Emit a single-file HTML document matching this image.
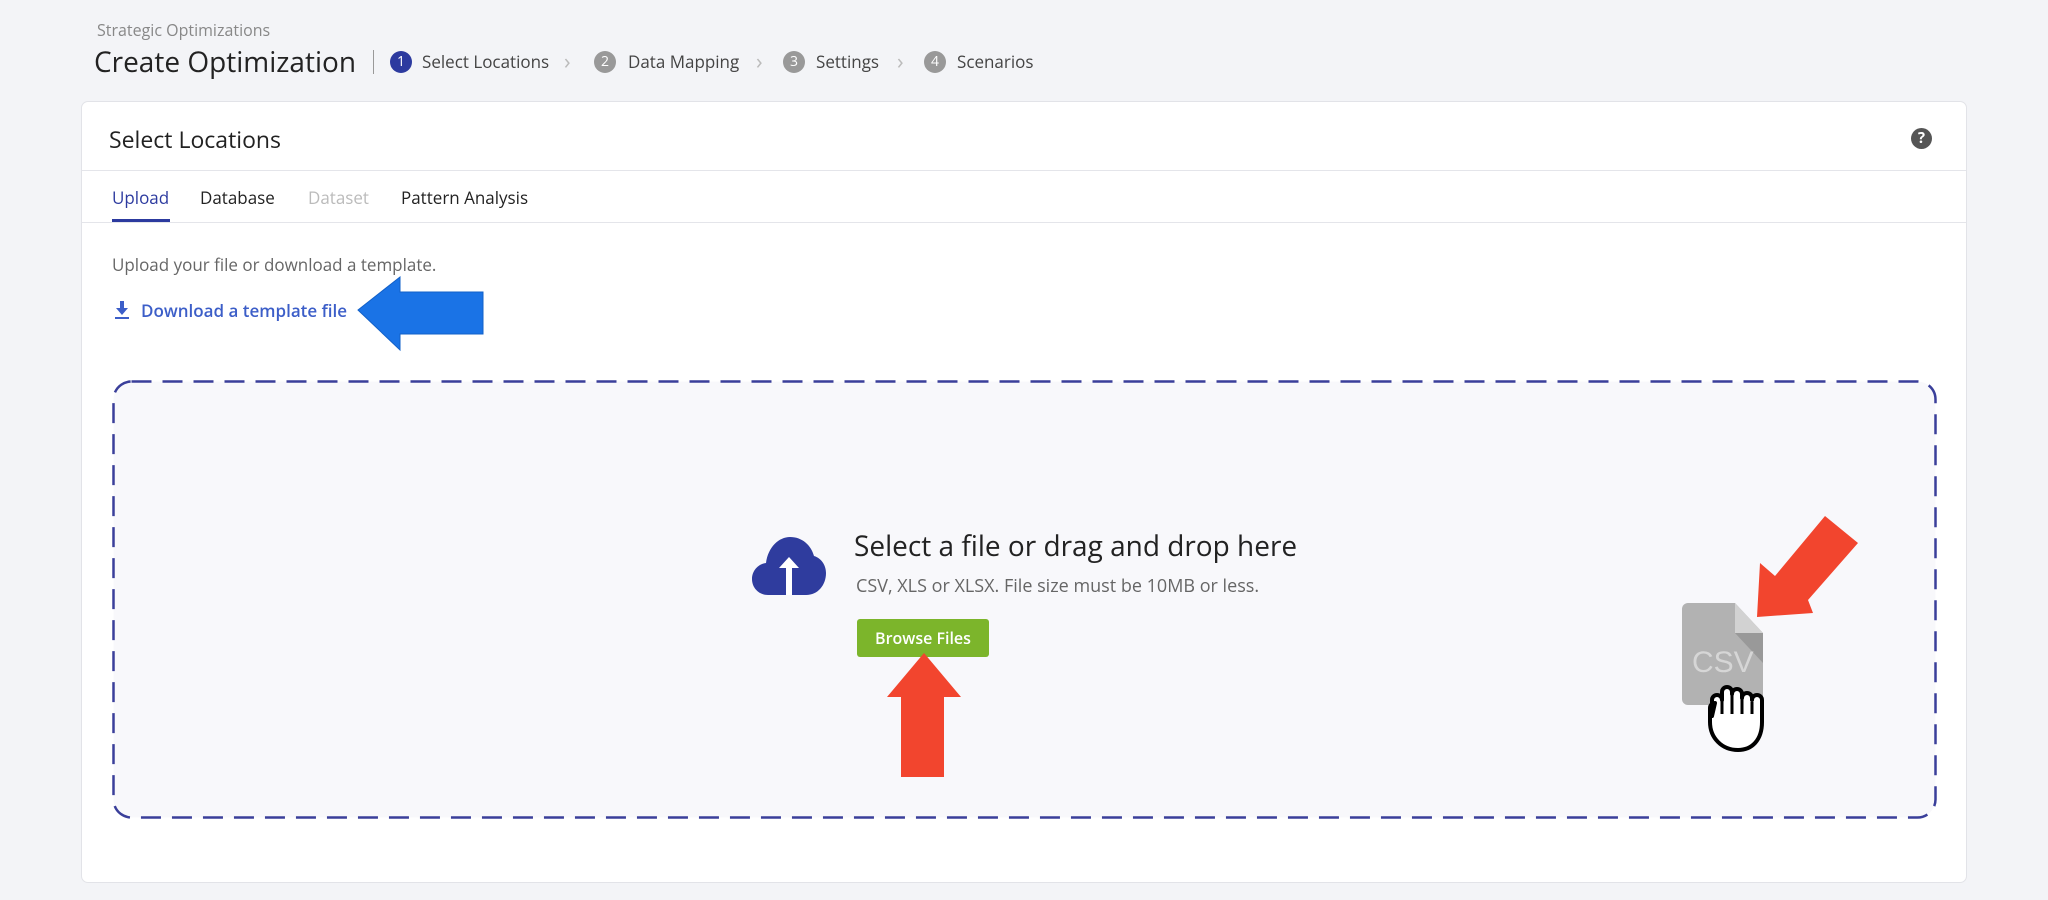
<!DOCTYPE html>
<html><head><meta charset="utf-8"><style>
*{margin:0;padding:0;box-sizing:border-box}
body{width:2048px;height:900px;background:#f3f4f7;font-family:"Open Sans","Liberation Sans",sans-serif;position:relative;overflow:hidden;color:#222}
.a{position:absolute;white-space:nowrap}
.circ{position:absolute;width:22px;height:22px;border-radius:50%;background:#999;color:#fff;font-size:14px;text-align:center;line-height:22px}
.step{font-size:17px;color:#444}
.chev{color:#bbb;font-size:22px;line-height:22px}
.card{position:absolute;left:81px;top:101px;width:1886px;height:782px;background:#fff;border:1px solid #e2e3e8;border-radius:7px}
.tab{font-size:17px;color:#222}
</style></head><body>
<div class="a" style="left:97px;top:19px;font-size:16px;color:#888">Strategic Optimizations</div>
<div class="a" style="left:94px;top:43px;font-size:28px;color:#222">Create Optimization</div>
<div class="a" style="left:373px;top:50px;width:1px;height:24px;background:#999"></div>
<div class="circ" style="left:390px;top:51px;background:#2c3a9f">1</div>
<div class="a step" style="left:422px;top:50px">Select Locations</div>
<div class="a chev" style="left:564px;top:50px">›</div>
<div class="circ" style="left:594px;top:51px">2</div>
<div class="a step" style="left:628px;top:50px">Data Mapping</div>
<div class="a chev" style="left:756px;top:50px">›</div>
<div class="circ" style="left:783px;top:51px">3</div>
<div class="a step" style="left:816px;top:50px">Settings</div>
<div class="a chev" style="left:897px;top:50px">›</div>
<div class="circ" style="left:924px;top:51px">4</div>
<div class="a step" style="left:957px;top:50px">Scenarios</div>

<div class="card"></div>
<div class="a" style="left:109px;top:123px;font-size:23px;color:#222">Select Locations</div>
<div class="a" style="left:1911px;top:128px;width:21px;height:21px;border-radius:50%;background:#555;color:#fff;font-size:15px;font-weight:bold;text-align:center;line-height:21px">?</div>
<div class="a" style="left:82px;top:170px;width:1884px;height:1px;background:#e4e5ea"></div>
<div class="a tab" style="left:112px;top:186px;color:#2c3a9f">Upload</div>
<div class="a" style="left:112px;top:219px;width:58px;height:3px;background:#2c3a9f"></div>
<div class="a tab" style="left:200px;top:186px">Database</div>
<div class="a tab" style="left:308px;top:186px;color:#bbb">Dataset</div>
<div class="a tab" style="left:401px;top:186px">Pattern Analysis</div>
<div class="a" style="left:82px;top:222px;width:1884px;height:1px;background:#e4e5ea"></div>
<div class="a" style="left:112px;top:253px;font-size:17px;color:#666">Upload your file or download a template.</div>
<svg class="a" style="left:114px;top:300px" width="16" height="20" viewBox="0 0 16 20"><path d="M6 1h4v7h4l-6 7-6-7h4z" fill="#3c5ec8"/><rect x="1" y="17" width="14" height="2" fill="#3c5ec8"/></svg>
<div class="a" style="left:141px;top:299px;font-size:17px;color:#3c5ec8;font-weight:600">Download a template file</div>

<svg class="a" style="left:0;top:0" width="2048" height="900">
<rect x="113.5" y="381.5" width="1822" height="436" rx="18" fill="#f8f8fb" stroke="#3a3f9a" stroke-width="2.5" stroke-dasharray="20 11"/>
</svg>
<svg class="a" style="left:752px;top:535px" width="74" height="60" viewBox="0 0 74 60"><path d="M16 60C7 60 0 53 0 44c0-8 6-15 14-16C16 12 27 2 38 2c12 0 21 8 24 19 7 2 12 9 12 17 0 12-8 22-20 22z" fill="#2f3c9e"/><path d="M37 22l-10 11h7v27h6V33h7z" fill="#fff"/></svg>
<div class="a" style="left:854px;top:527px;font-size:28px;color:#222">Select a file or drag and drop here</div>
<div class="a" style="left:856px;top:574px;font-size:18px;color:#666">CSV, XLS or XLSX. File size must be 10MB or less.</div>
<div class="a" style="left:857px;top:619px;width:132px;height:38px;background:#7cb52b;border-radius:3px;color:#fff;font-size:16px;font-weight:600;text-align:center;line-height:38px">Browse Files</div>

<svg class="a" style="left:0;top:0" width="2048" height="900">
<path d="M358 310 L400 277 L400 292 L483 292 L483 334 L400 334 L400 350 Z" fill="#1a73e6" stroke="#1260c8" stroke-width="1"/>
<path d="M924 653 L961 697 L944 697 L944 777 L901 777 L901 697 L887 697 Z" fill="#f2452e"/>
<path d="M1757 617 L1760 563 L1775 576 L1825 516 L1858 543 L1808 600 L1813 613 Z" fill="#f2452e"/>
<path d="M1682 609 a6 6 0 0 1 6 -6 h47 l28 30 v66 a6 6 0 0 1 -6 6 h-69 a6 6 0 0 1 -6 -6z" fill="#b2b2b2"/>
<path d="M1735 603 l28 30 h-28z" fill="#d2d2d2"/>
<path d="M1735 633 h28 v30z" fill="#999"/>
<text x="1692" y="672" font-family="Liberation Sans,sans-serif" font-size="30" fill="#d6d6d6">CSV</text>
<path d="M1712 716 v-16 a5 5 0 0 1 10 0 v-8 a5 5 0 0 1 10 0 v2 a5 5 0 0 1 10 0 v4 a5 5 0 0 1 10 0 v2 a5 5 0 0 1 10 0 v22 c0 18 -10 28 -24 28 c-16 0 -28 -12 -28 -28 v-14 a5 5 0 0 1 5 -5 z" fill="#fff" stroke="#000" stroke-width="4" stroke-linejoin="round"/>
<path d="M1722 700v14M1732 694v20M1742 698v16M1752 702v12" stroke="#000" stroke-width="3"/>
</svg>
</body></html>
